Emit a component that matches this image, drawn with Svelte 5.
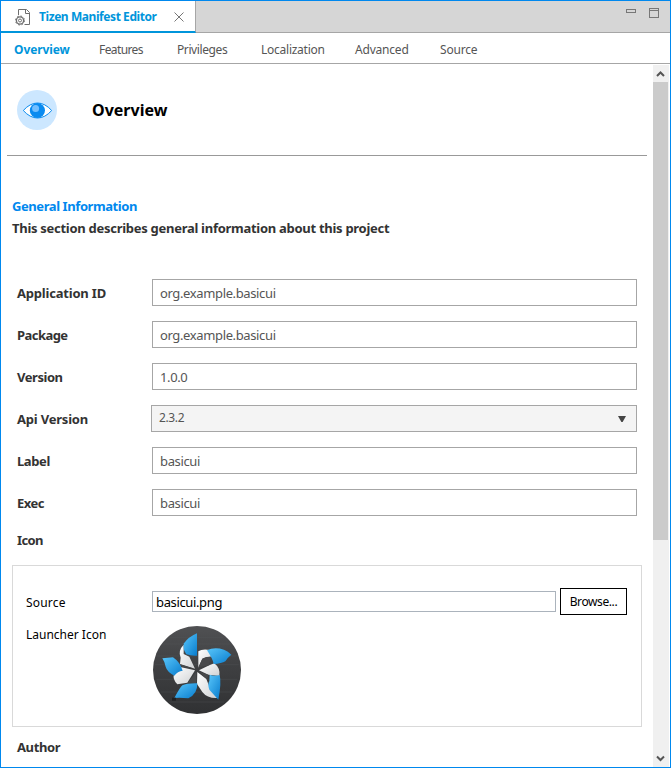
<script>
  const tabs = [
    { name: 'Overview', width: 85, ls: -0.1 },
    { name: 'Features', width: 78, ls: -0.6 },
    { name: 'Privileges', width: 84, ls: -0.4 },
    { name: 'Localization', width: 94, ls: -0.25 },
    { name: 'Advanced', width: 85, ls: -0.2 },
    { name: 'Source', width: 60, ls: -0.2 }
  ];
  const fields = [
    { label: 'Application ID', value: 'org.example.basicui', ls: -0.2 },
    { label: 'Package', value: 'org.example.basicui', ls: -0.55 },
    { label: 'Version', value: '1.0.0', ls: -0.45 },
    { label: 'Api Version', value: '2.3.2', ls: -0.2, select: true },
    { label: 'Label', value: 'basicui', ls: -0.4 },
    { label: 'Exec', value: 'basicui', ls: -0.5 }
  ];
</script>

<div class="window">
  <header class="titlebar">
    <div class="tab">
      <svg class="file" width="16" height="18" viewBox="0 0 16 18" fill="none" stroke="#6e6e6e">
        <path d="M3.5 7V1.5H11.5L14.5 4.5V16.5H9.5M10.5 1.5V5.5H14.5" />
        <circle cx="5" cy="12.5" r="3.6" stroke-width="1.3" />
        <circle cx="5" cy="12.5" r="4.5" stroke-width="1" stroke-dasharray="1.7 1.83" />
        <circle cx="5" cy="12.5" r="1.5" />
      </svg>
      <span class="tabname">Tizen Manifest Editor</span>
      <svg class="close" width="10" height="10" viewBox="0 0 10 10" stroke="#666" stroke-width=".9"><path d="M.5 .5 9.5 9.5M9.5 .5 .5 9.5" /></svg>
    </div>
    <div class="controls">
      <svg width="10" height="10" viewBox="0 0 10 10" fill="none" stroke="#777" shape-rendering="crispEdges">
        <path d="M.5 1.5H9.5V4.5H.5Z" />
      </svg>
      <svg width="10" height="10" viewBox="0 0 10 10" fill="none" stroke="#777" shape-rendering="crispEdges">
        <path d="M.5 .5H9.5V9.5H.5ZM.5 2.5H9.5" />
      </svg>
    </div>
  </header>

  <nav>
    {#each tabs as tab, i}
      <span class:active={i === 0} style:width="{tab.width}px" style:letter-spacing="{tab.ls}px">{tab.name}</span>
    {/each}
  </nav>

  <div class="body">
    <main>
      <div class="head">
        <svg width="40" height="40" viewBox="0 0 40 40">
          <circle cx="20" cy="20" r="20" fill="#cce7ff" />
          <path d="M6.3 20.5Q13 13 20.5 13T34.7 20.5Q28 28 20.5 28T6.3 20.5Z" fill="#fff" stroke="#0b8cf0" />
          <circle cx="20.4" cy="20.5" r="7.6" fill="#0a8bf0" />
          <circle cx="18.6" cy="18.4" r="3.5" fill="#73bfff" />
        </svg>
        <h1>Overview</h1>
      </div>
      <h2>General Information</h2>
      <p class="desc">This section describes general information about this project</p>

      <div class="fields">
        {#each fields as f}
          <div class="row">
            <span class="label" style:letter-spacing="{f.ls}px">{f.label}</span>
            <div class="input" class:select={f.select}>
              <span>{f.value}</span>
              {#if f.select}
                <svg width="8" height="6" viewBox="0 0 8 6"><path d="M0 0H8L4.6 6H3.4Z" fill="#444" /></svg>
              {/if}
            </div>
          </div>
        {/each}
      </div>

      <div class="label icon-label">Icon</div>
      <section>
        <div class="source">
          <span class="plain">Source</span>
          <div class="path">basicui.png</div>
          <button>Browse...</button>
        </div>
        <div class="launcher">
          <span class="plain">Launcher Icon</span>
          <svg width="88" height="88" viewBox="24 18 264 264">
            <defs>
              <linearGradient id="disc" x1="0" y1="0" x2="0" y2="1"><stop offset="0" stop-color="#505153" /><stop offset=".45" stop-color="#3f4042" /><stop offset="1" stop-color="#303133" /></linearGradient>
              <linearGradient id="blue" x1="0" y1="0" x2="1" y2="1"><stop offset="0" stop-color="#58c5fa" /><stop offset="1" stop-color="#087ccd" /></linearGradient>
              <linearGradient id="white" x1="0" y1="0" x2="1" y2="1"><stop offset="0" stop-color="#fff" /><stop offset="1" stop-color="#cfd1d3" /></linearGradient>
            </defs>
            <circle cx="156" cy="150" r="132" fill="url(#disc)" />
            <path d="M75 52H235M55 72H255M36 108H275M30 134H281M34 178H277M48 216H262M73 246H238" stroke="#55575a" stroke-width="2" opacity=".5" />
            <g fill="url(#white)">
              <path d="M116 74Q98 92 107 113L105 132L150 146L133 110L116 102Z" />
              <path d="M194 90Q172 86 160 94V143L172 116Q188 108 208 110Z" />
              <path d="M208 130Q227 145 223 168L190 164L162 151L193 136Z" />
              <path d="M157 156L184 177L195 205L219 234Q187 236 172 216L156 192Z" />
              <path d="M109 142L150 151L127 188L97 193Q82 178 87 163Z" />
            </g>
            <path d="M160 142L172 116Q180 110 198 110L192 136ZM105 133L148 146L112 140ZM163 156L190 164L186 178ZM128 188L154 156V190Z" fill="#48494b" />
            <g fill="url(#blue)">
              <path d="M156 40V107Q138 108 124 103Q112 86 117 70Q130 51 156 40Z" />
              <path d="M186 91Q208 80 237 89Q249 93 259 104Q246 114 241 124Q230 131 206 132Q204 118 186 91Z" />
              <path d="M52 115L84 112Q105 126 113 152Q98 154 88 167Q66 155 62 140Q60 127 52 115Z" />
              <path d="M88 234Q105 202 112 196Q125 189 157 190Q158 222 130 235Q105 232 88 234Z" />
              <path d="M194 164Q208 170 224 165Q230 188 220 239L193 209Q187 193 193 183Z" />
            </g>
            <path d="M81 233h12v9h-12z" fill="#202123" />
          </svg>
        </div>
      </section>
      <div class="label author">Author</div>
    </main>
    <aside>
      <svg width="15" height="17" viewBox="0 0 15 17" fill="none" stroke="#555" stroke-width="2"><path d="M4 11 7.5 7.5 11 11" /></svg>
      <div class="thumb"></div>
      <svg class="down" width="15" height="17" viewBox="0 0 15 17" fill="none" stroke="#555" stroke-width="2"><path d="M4 6.5 7.5 10 11 6.5" /></svg>
    </aside>
  </div>
</div>

<style>
  .window { box-sizing: border-box; width: 671px; height: 768px; border: 1px solid #0088ee; background: #fff; overflow: hidden; display: flex; flex-direction: column; font: 12px/16px "Noto Sans", sans-serif; color: #333; }
  .titlebar { box-sizing: border-box; height: 32px; flex: none; display: flex; justify-content: space-between; background: linear-gradient(#a6a6a6, #a6a6a6) bottom / 100% 1px no-repeat #d6d6d6; }
  .tab { box-sizing: border-box; width: 195px; height: 32px; padding: 1px 0 0 14px; display: flex; align-items: center; background: #fff; border-right: 1px solid #a6a6a6; border-bottom: 2px solid #0095db; }
  .tabname { width: 135px; margin-left: 8px; padding-top: 1px; color: #0095db; font-weight: 700; letter-spacing: -.43px; white-space: nowrap; }
  .file { flex: none; }
  .close { flex: none; }
  .controls { display: flex; gap: 13px; padding: 7px 11px 0 0; }
  nav { box-sizing: border-box; height: 31px; flex: none; display: flex; align-items: center; padding: 3px 0 0 13px; border-bottom: 1px solid #a6a6a6; color: #555; }
  nav span { flex: none; white-space: nowrap; }
  nav .active { color: #0095db; font-weight: 700; }
  .body { flex: 1; min-height: 0; display: flex; justify-content: space-between; }
  main { width: 646px; overflow: hidden; }
  .head { box-sizing: border-box; height: 92px; margin-left: 6px; padding: 0 0 0 10px; display: flex; align-items: center; border-bottom: 1px solid #999; }
  h1 { margin: 0 0 0 35px; font-size: 16px; line-height: 22px; color: #000; }
  h2 { margin: 41px 0 0 11px; font-size: 13px; line-height: 18px; letter-spacing: -.42px; color: #0088ee; }
  .desc { margin: 3px 0 0 11px; font-size: 13px; line-height: 20px; font-weight: 700; letter-spacing: -.28px; white-space: nowrap; }
  .fields { margin-top: 41px; display: flex; flex-direction: column; gap: 15px; }
  .row { height: 27px; display: flex; align-items: center; justify-content: space-between; padding: 0 10px 0 16px; }
  .label { font-size: 13px; line-height: 20px; font-weight: 700; letter-spacing: -.4px; color: #333; }
  .row .label { padding-top: 1px; }
  .input { box-sizing: border-box; width: 485px; height: 27px; border: 1px solid #a6a6a6; padding: 1px 10px 0 7px; display: flex; align-items: center; justify-content: space-between; color: #555; font-size: 13px; letter-spacing: -.37px; }
  .select { width: 486px; background: #f4f4f4; padding: 0 10px 0 7px; font-size: 12px; }
  .select span { margin-top: -1px; }
  .icon-label { margin: 14px 0 0 16px; letter-spacing: -.6px; }
  section { box-sizing: border-box; width: 630px; height: 162px; margin: 15px 0 0 11px; border: 1px solid #d9d9d9; padding: 22px 14px 0 13px; }
  .source { display: flex; align-items: center; height: 27px; }
  .plain { width: 126px; flex: none; padding-top: 1px; color: #000; font-size: 12px; }
  .source .plain { padding-top: 2px; letter-spacing: .2px; }
  .path { box-sizing: border-box; width: 404px; height: 21px; border: 1px solid #abb3bc; padding-left: 3px; font-size: 13px; line-height: 21px; letter-spacing: -.36px; color: #000; }
  button { box-sizing: border-box; width: 67px; height: 27px; margin-left: 4px; padding: 0; border: 1px solid #000; background: #fff; font: 12px "Noto Sans", sans-serif; letter-spacing: -.4px; color: #000; }
  .launcher { display: flex; align-items: flex-start; padding-top: 11px; }
  .launcher .plain { width: 127px; }
  .author { margin: 10px 0 0 16px; }
  aside { width: 16px; margin: 1px 1px 0 0; display: flex; flex-direction: column; background: #f0f0f0; }
  .thumb { width: 15px; height: 458px; background: #cbcbcb; }
  .down { margin-top: auto; }
</style>
